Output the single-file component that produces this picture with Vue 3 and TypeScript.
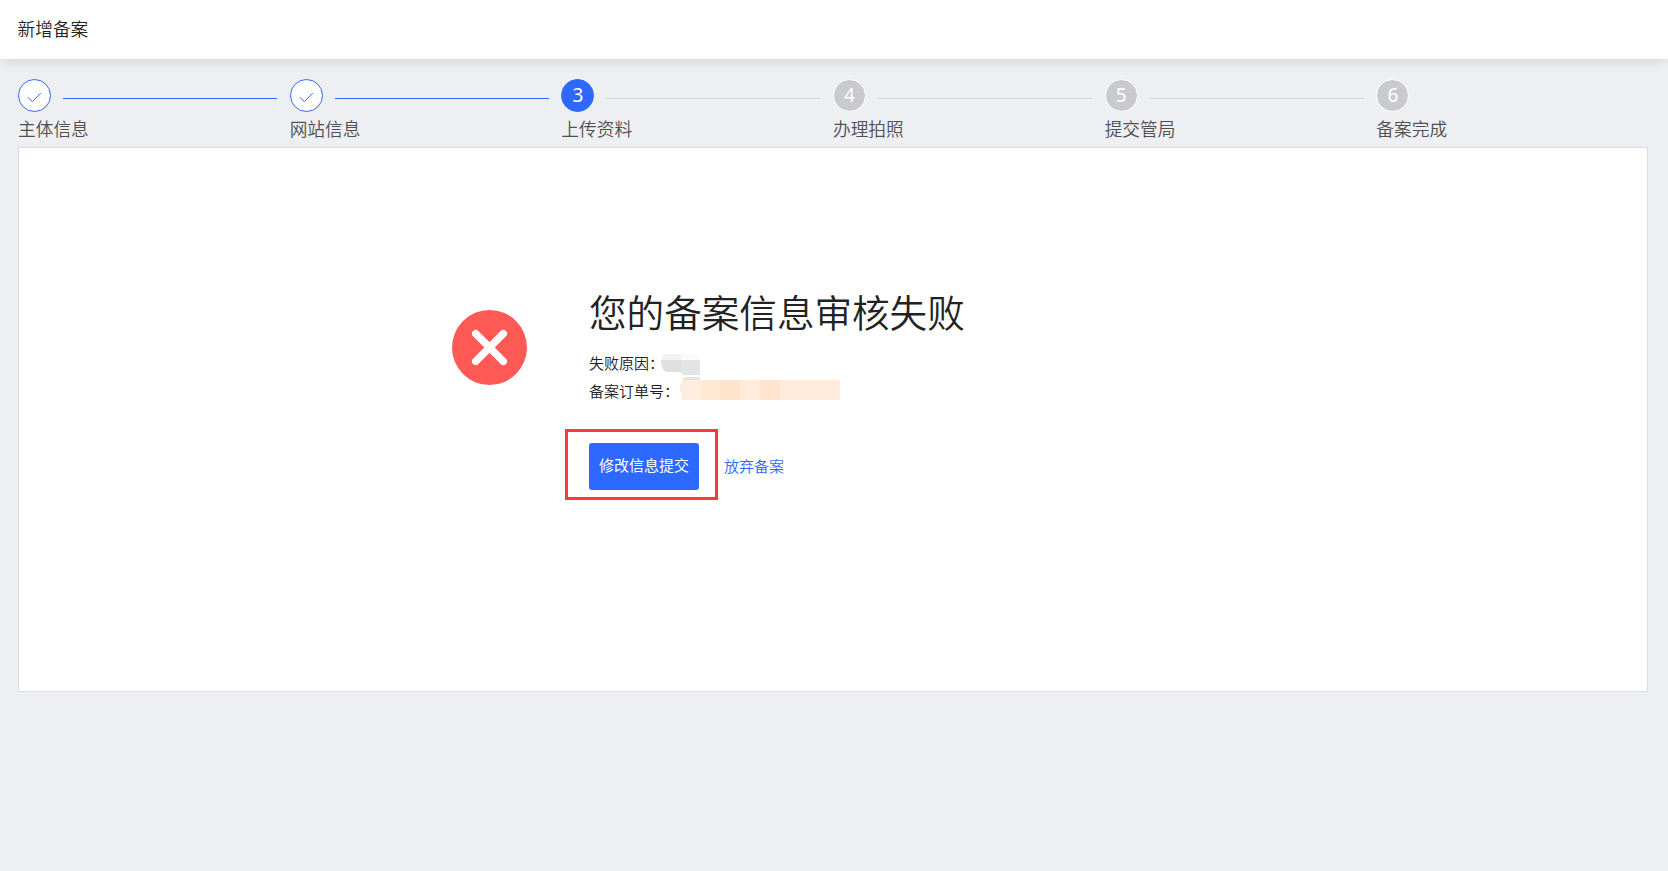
<script setup lang="ts">
type StepState = 'done' | 'active' | 'pending'

interface Step {
  label: string
  state: StepState
}

const steps: Step[] = [
  { label: '主体信息', state: 'done' },
  { label: '网站信息', state: 'done' },
  { label: '上传资料', state: 'active' },
  { label: '办理拍照', state: 'pending' },
  { label: '提交管局', state: 'pending' },
  { label: '备案完成', state: 'pending' },
]
</script>

<template>
  <div class="page">
    <header class="header">新增备案</header>
    <ol class="steps">
      <li v-for="(step, i) in steps" :key="step.label" class="step" :class="step.state">
        <div class="track">
          <span class="marker">
            <svg v-if="step.state === 'done'" width="15" height="12" viewBox="0 0 15 12" fill="none">
              <path d="M1 5.2 5.2 9.7 13.7 1.2" stroke="currentColor" stroke-width="1" />
            </svg>
            <template v-else>{{ i + 1 }}</template>
          </span>
          <span v-if="i < steps.length - 1" class="line"></span>
        </div>
        <div class="label">{{ step.label }}</div>
      </li>
    </ol>
    <main class="panel">
      <svg class="fail-icon" width="75" height="75" viewBox="0 0 75 75">
        <circle cx="37.5" cy="37.5" r="37.5" fill="#ff5956" />
        <path d="M23.7 23.7 51.3 51.3M51.3 23.7 23.7 51.3" stroke="#fff" stroke-width="7.5" stroke-linecap="round" />
      </svg>
      <section class="result">
        <h1 class="title">您的备案信息审核失败</h1>
        <div class="row">失败原因：
          <svg class="mask reason" width="40" height="29" viewBox="0 0 40 29" shape-rendering="crispEdges">
            <path d="M1 4Q1 0 6 0H20V6H1Z" fill="#f2f2f2" />
            <path d="M20 0H30Q35 0 37 4L39 6H20Z" fill="#fafafa" />
            <path d="M0 6H20V18H8Q2 18 1 13Z" fill="#e0e0e0" />
            <path d="M20 6H39V21H24Q20 21 20 17Z" fill="#e4e4e4" />
            <path d="M22 25Q23 23 29 23H39V26H21Z" fill="#e4e4e4" />
          </svg>
        </div>
        <div class="row">备案订单号：
          <svg class="mask order" width="160" height="20" viewBox="0 0 160 20" shape-rendering="crispEdges">
            <path d="M2 0H20V20H2V14Q0 11 0 6Z" fill="#ffeddd" />
            <path d="M20 0H40V20H20Z" fill="#ffe9d3" />
            <path d="M40 0H60V20H40Z" fill="#ffe4cd" />
            <path d="M60 0H80V20H60Z" fill="#ffebdb" />
            <path d="M80 0H100V20H80Z" fill="#ffe5d0" />
            <path d="M100 0H120V20H100Z" fill="#ffebdb" />
            <path d="M120 0H160V20H120Z" fill="#ffebd9" />
          </svg>
        </div>
        <div class="actions">
          <div class="highlight">
            <button class="submit" type="button">修改信息提交</button>
          </div>
          <a class="abandon">放弃备案</a>
        </div>
      </section>
    </main>
  </div>
</template>

<style>
body {
  background: #eeeff3;
}
</style>

<style scoped>
.page {
  box-sizing: border-box;
  height: 871px;
  overflow: hidden;
  color: #222;
  font-family: "Noto Sans CJK SC", sans-serif;
  font-weight: 350;
}
.header {
  box-sizing: border-box;
  height: 59px;
  padding-left: 17.5px;
  background: #fff;
  font-size: 17.7px;
  line-height: 56px;
  box-shadow: 0 4px 12px -2px rgba(0, 0, 0, 0.12);
}
.steps {
  display: grid;
  grid-template-columns: repeat(6, 1fr);
  margin: 20px 20px 0 18px;
  padding: 0;
  height: 68px;
  list-style: none;
}
.track {
  display: flex;
  align-items: center;
  height: 33px;
}
.marker {
  box-sizing: border-box;
  display: flex;
  align-items: center;
  justify-content: center;
  flex: none;
  width: 33px;
  height: 33px;
  border: 1px solid #2d69ff;
  border-radius: 50%;
  color: #2d69ff;
  background: #fff;
  font-family: "Noto Sans", sans-serif;
  font-size: 19px;
  font-weight: 400;
  line-height: 31px;
}
.marker svg {
  margin-top: 5px;
}
.active .marker {
  color: #fff;
  background: #2d69ff;
}
.pending .marker {
  border-color: #fff;
  color: #fff;
  background: #c9cacf;
}
.line {
  flex: 1;
  height: 1px;
  margin: 6px 12.5px 0 12px;
  background: #d4d5da;
}
.done .line {
  background: #2d69ff;
}
.label {
  margin-top: 3px;
  color: #505050;
  font-size: 17.7px;
  line-height: 26px;
}
.panel {
  box-sizing: border-box;
  display: flex;
  align-items: flex-start;
  height: 545px;
  margin: 0 20px 0 18px;
  padding-left: 433px;
  border: 1px solid #dadde3;
  background: #fff;
}
.fail-icon {
  flex: none;
  margin-top: 162px;
}
.result {
  margin: 136px 0 0 62px;
}
.title {
  margin: 0 0 11px;
  font-size: 37.6px;
  font-weight: 350;
  line-height: 54px;
}
.row {
  display: flex;
  height: 28px;
  font-size: 15px;
  line-height: 28px;
}
.mask {
  flex: none;
}
.reason {
  margin: 5px 0 0 -3px;
}
.order {
  margin: 3px 0 0 1px;
}
.actions {
  display: flex;
  align-items: center;
  margin: 24px 0 0 -24px;
}
.highlight {
  box-sizing: border-box;
  width: 153px;
  height: 71px;
  padding: 11px 0 0 21px;
  border: 3px solid #fb3b3b;
}
.submit {
  display: block;
  width: 110px;
  height: 47px;
  padding: 0 0 3px;
  border: 0;
  border-radius: 3px;
  color: #fff;
  background: #2d69ff;
  font-family: inherit;
  font-size: 15px;
  font-weight: 400;
  line-height: 44px;
}
.abandon {
  margin: 2px 0 0 6px;
  color: #2d69ff;
  font-size: 15px;
}
</style>
